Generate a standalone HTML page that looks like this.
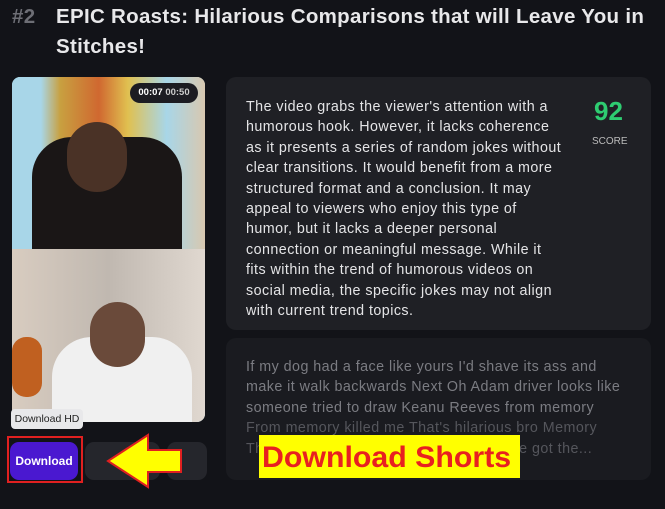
<!DOCTYPE html><html><head><style>
body{margin:0;width:665px;height:509px;background:#121318;overflow:hidden;font-family:"Liberation Sans",sans-serif;position:relative}
.a{position:absolute;white-space:nowrap}
.t{color:#e8e8ea;font-size:20.5px;font-weight:bold;line-height:30px;letter-spacing:0.3px;white-space:nowrap}
.card{background:#1f2025;border-radius:10px}
.txt{color:#e4e4e6;font-size:14.3px;line-height:20.4px;white-space:pre;letter-spacing:0.45px}
.txt2{color:#7b7c82;font-size:14.3px;line-height:20.4px;white-space:pre;letter-spacing:0.45px}
</style></head><body>
<div class="a t" style="left:12px;top:2px"><span style="color:#6d6e75">#2</span></div>
<div class="a t" style="left:56px;top:2px">EPIC Roasts: Hilarious Comparisons that will Leave You in</div>
<div class="a t" style="left:56px;top:32px">Stitches!</div>

<div class="a" style="left:12px;top:77px;width:193px;height:345px;border-radius:8px;overflow:hidden;background:#9fd0e0">
 <div class="a" style="left:0;top:0;width:193px;height:172px;background:linear-gradient(90deg,#a8d6e8 0,#a8d6e8 15%,#c8a040 25%,#d06830 45%,#e0c050 60%,#a8d6e8 80%,#d8c8b0 100%)"></div>
 <div class="a" style="left:20px;top:60px;width:150px;height:112px;background:#1a1616;border-radius:40px 40px 0 0"></div>
 <div class="a" style="left:55px;top:45px;width:60px;height:70px;background:#4a3226;border-radius:30px"></div>
 <div class="a" style="left:0;top:172px;width:193px;height:173px;background:linear-gradient(90deg,#d8ccc0,#c0b8b0 50%,#e0d8d0)"></div>
 <div class="a" style="left:40px;top:260px;width:140px;height:85px;background:#f0f0f0;border-radius:40px 40px 0 0"></div>
 <div class="a" style="left:78px;top:225px;width:55px;height:65px;background:#6a4a3a;border-radius:28px"></div>
 <div class="a" style="left:0;top:260px;width:30px;height:60px;background:#c06020;border-radius:14px"></div>
 <div class="a" style="left:118px;top:6px;width:68px;height:20px;background:#1c1c22;border-radius:10px;color:#fff;font-size:9.5px;font-weight:bold;line-height:20px;text-align:center">00:07 <span style="color:#ccc">00:50</span></div>
</div>

<div class="a" style="left:11px;top:409px;width:72px;height:20px;background:#e8e8ea;border-radius:4px;font-size:10.5px;line-height:20px;text-align:center;color:#222">Download HD</div>
<div class="a" style="left:7px;top:436px;width:72px;height:43px;border:2px solid #e02020"></div>
<div class="a" style="left:10px;top:442px;width:68px;height:38px;background:#4a18d0;border-radius:9px;color:#fff;font-size:12px;font-weight:bold;line-height:38px;text-align:center">Download</div>
<div class="a" style="left:85px;top:442px;width:75px;height:38px;background:#25262c;border-radius:9px"></div>
<div class="a" style="left:167px;top:442px;width:40px;height:38px;background:#25262c;border-radius:9px"></div>
<svg class="a" style="left:105px;top:432px" width="80" height="60"><polygon points="76,18 43,18 43,3 3,29 43,55 43,40 76,40" fill="#ffff00" stroke="#e02020" stroke-width="2"/></svg>

<div class="a card" style="left:226px;top:77px;width:425px;height:253px"></div>
<div class="a txt" style="left:246px;top:97px">The video grabs the viewer's attention with a
humorous hook. However, it lacks coherence
as it presents a series of random jokes without
clear transitions. It would benefit from a more
structured format and a conclusion. It may
appeal to viewers who enjoy this type of
humor, but it lacks a deeper personal
connection or meaningful message. While it
fits within the trend of humorous videos on
social media, the specific jokes may not align
with current trend topics.</div>
<div class="a" style="left:594px;top:96px;color:#2ecc71;font-size:26px;font-weight:bold">92</div>
<div class="a" style="left:592px;top:136px;color:#bbb;font-size:10px">SCORE</div>

<div class="a card" style="left:226px;top:338px;width:425px;height:142px;background:#1a1b20"></div>
<div class="a txt2" style="left:246px;top:357px">If my dog had a face like yours I'd shave its ass and
make it walk backwards Next Oh Adam driver looks like
someone tried to draw Keanu Reeves from memory
<span style="color:#55565c">From memory killed me That's hilarious bro Memory
Th                                                      one got the...</span></div>

<div class="a" style="left:259px;top:435px;width:261px;height:43px;background:#ffff00;overflow:hidden">
 <div style="color:#e82020;font-weight:bold;font-size:30px;line-height:45px;white-space:nowrap;transform:scaleX(1.01);transform-origin:0 0;margin-left:3px">Download Shorts</div>
</div>
</body></html>
